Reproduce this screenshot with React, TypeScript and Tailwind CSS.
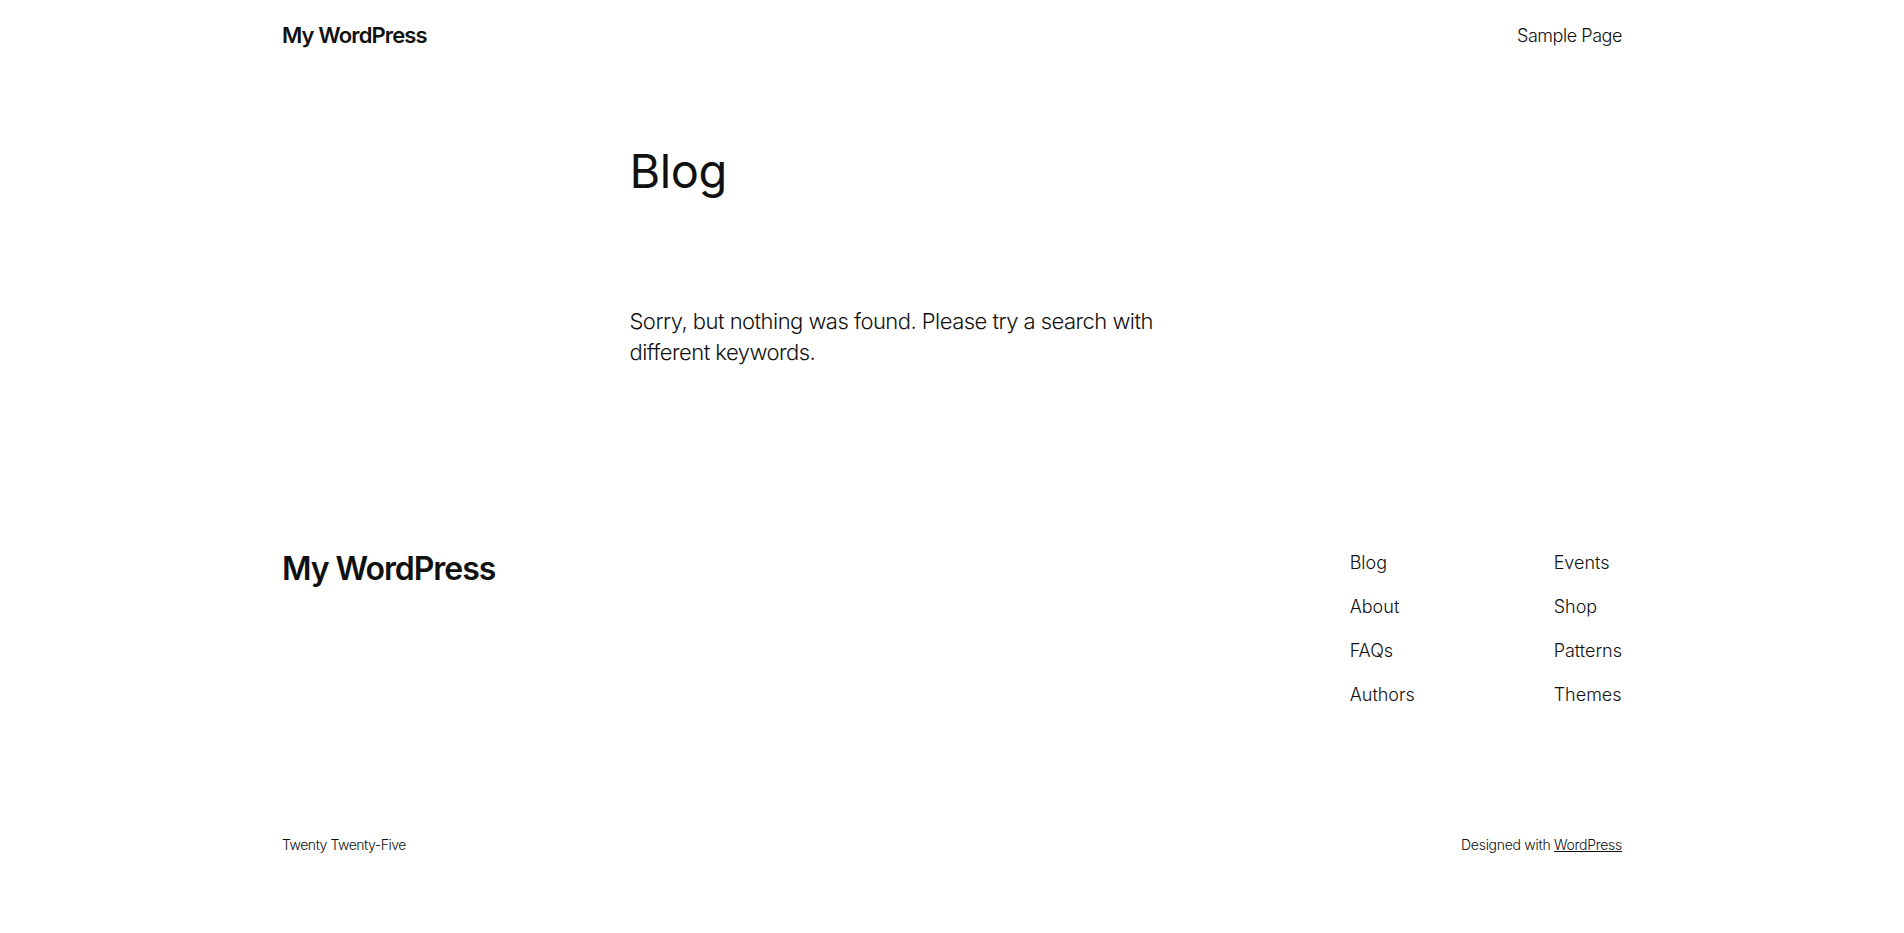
import React from "react";

const font = { fontFamily: "Inter, 'Noto Sans', sans-serif" };

export default function App() {
  return (
    <div className="min-h-[933px] bg-white text-[#111111]" style={font}>
      <div className="mx-auto w-[1340px]">
        <header className="flex items-center justify-between pt-[20px]">
          <div className="text-[22px] leading-[1.4] font-semibold tracking-[-0.04em]">My WordPress</div>
          <nav className="text-[18px] leading-[1.4] font-light tracking-[-0.025em]">Sample Page</nav>
        </header>
      </div>

      <main className="mx-auto w-[645px] pt-[92px]">
        <h1 className="text-[47px] leading-[1.2] font-normal tracking-[-0.01em]">Blog</h1>
        <p className="mt-[107px] max-w-[560px] text-[22px] leading-[30.8px] font-light tracking-[-0.024em]">
          Sorry, but nothing was found. Please try a search with different keywords.
        </p>
      </main>

      <footer className="mx-auto w-[1340px] pt-[180px] pb-[78px]">
        <div className="flex items-start justify-between">
          <div className="pt-[2px] text-[32px] leading-[1.2] font-semibold tracking-[-0.033em]">My WordPress</div>
          <div className="flex pt-[2px] text-[18px] leading-[1.4] font-light">
            <ul className="flex w-[204px] flex-col gap-[19px]">
              <li>Blog</li>
              <li>About</li>
              <li>FAQs</li>
              <li>Authors</li>
            </ul>
            <ul className="flex flex-col gap-[19px]">
              <li>Events</li>
              <li>Shop</li>
              <li>Patterns</li>
              <li>Themes</li>
            </ul>
          </div>
        </div>
        <div className="mt-[127px] flex items-center justify-between text-[14px] leading-[1.4] font-light">
          <div className="tracking-[-0.034em]">Twenty Twenty-Five</div>
          <div className="tracking-[-0.02em]">
            Designed with <a className="underline" href="#">WordPress</a>
          </div>
        </div>
      </footer>
    </div>
  );
}
